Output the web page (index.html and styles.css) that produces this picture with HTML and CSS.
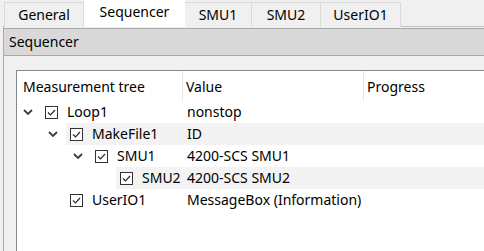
FILE: index.html
```html
<!DOCTYPE html>
<html lang="en">
  <head>
    <meta charset="UTF-8" />
    <title>Sequencer</title>
    <link rel="stylesheet" href="styles.css">
  </head>
  <body>
    <div class="window">
      <div class="tabs">
        <div class="tab tab-general">General</div>
        <div class="tab tab-sequencer active">Sequencer</div>
        <div class="tab tab-smu1">SMU1</div>
        <div class="tab tab-smu2">SMU2</div>
        <div class="tab tab-userio">UserIO1</div>
      </div>
      <!-- .tabs -->

      <div class="pane">
        <div class="pane-title">Sequencer</div>

        <div class="tree">
          <div class="tree-header">
            <div class="head head-name">Measurement tree</div>
            <div class="head head-value">Value</div>
            <div class="head head-progress">Progress</div>
          </div>

          <div class="row lvl0">
            <div class="tree-cell">
              <span class="branch">
                <svg width="10" height="6" viewBox="0 0 10 6"><path d="M1 1 L5 5 L9 1" /></svg>
              </span>
              <span class="item">
                <span class="check"><svg width="11" height="11" viewBox="0 0 11 11"><path d="M2 5.5 L4.5 8 L9 3" /></svg></span>
                Loop1
              </span>
            </div>
            <div class="cell value">nonstop</div>
            <div class="cell"></div>
          </div>

          <div class="row lvl1 alt">
            <div class="tree-cell">
              <span class="branch">
                <svg width="10" height="6" viewBox="0 0 10 6"><path d="M1 1 L5 5 L9 1" /></svg>
              </span>
              <span class="item">
                <span class="check"><svg width="11" height="11" viewBox="0 0 11 11"><path d="M2 5.5 L4.5 8 L9 3" /></svg></span>
                MakeFile1
              </span>
            </div>
            <div class="cell value">ID</div>
            <div class="cell"></div>
          </div>

          <div class="row lvl2">
            <div class="tree-cell">
              <span class="branch">
                <svg width="10" height="6" viewBox="0 0 10 6"><path d="M1 1 L5 5 L9 1" /></svg>
              </span>
              <span class="item">
                <span class="check"><svg width="11" height="11" viewBox="0 0 11 11"><path d="M2 5.5 L4.5 8 L9 3" /></svg></span>
                SMU1
              </span>
            </div>
            <div class="cell value">4200-SCS SMU1</div>
            <div class="cell"></div>
          </div>

          <div class="row lvl3 alt">
            <div class="tree-cell">
              <span class="branch"></span>
              <span class="item">
                <span class="check"><svg width="11" height="11" viewBox="0 0 11 11"><path d="M2 5.5 L4.5 8 L9 3" /></svg></span>
                SMU2
              </span>
            </div>
            <div class="cell value">4200-SCS SMU2</div>
            <div class="cell"></div>
          </div>

          <div class="row lvl1">
            <div class="tree-cell">
              <span class="branch"></span>
              <span class="item">
                <span class="check"><svg width="11" height="11" viewBox="0 0 11 11"><path d="M2 5.5 L4.5 8 L9 3" /></svg></span>
                UserIO1
              </span>
            </div>
            <div class="cell value">MessageBox (Information)</div>
            <div class="cell"></div>
          </div>
        </div>
        <!-- .tree -->
      </div>
      <!-- .pane -->
    </div>
    <!-- .window -->
  </body>
</html>
```

FILE: styles.css
```css
*,
*::before,
*::after {
  box-sizing: border-box;
  padding: 0;
  margin: 0;
  font-family: 'Noto Sans', 'Liberation Sans', sans-serif;
}

body {
  width: 484px;
  height: 251px;
  overflow: hidden;
  background-color: #f0f0f0;
  color: #000;
  font-size: 14px;
}

.window {
  width: 100%;
  height: 251px;
  display: flex;
  flex-direction: column;
}

/* tab strip */

.tabs {
  display: flex;
  height: 26px;
  padding-left: 4px;
  position: relative;
  z-index: 1;
}

.tab {
  height: 25px;
  margin-top: 2px;
  display: flex;
  justify-content: center;
  align-items: center;
  padding-bottom: 2px;
  background-color: #f0f0f0;
  border: 1px solid #d9d9d9;
  border-bottom: none;
  border-left: none;
}

.tab-general {
  width: 80px;
  border-left: 1px solid #d9d9d9;
}

.tab-sequencer {
  width: 101px;
}

.tab-smu1 {
  width: 67px;
}

.tab-smu2 {
  width: 69px;
}

.tab-userio {
  width: 80px;
}

.tab.active {
  height: 27px;
  margin-top: 0;
  padding-bottom: 5px;
  background-color: #fff;
  border: none;
}

/* pane */

.pane {
  flex: 1;
  display: flex;
  flex-direction: column;
  margin-left: 3px;
  border-top: 1px solid #c4c4c4;
  border-left: 1px solid #adadad;
}

.pane-title {
  height: 28px;
  margin-top: 1px;
  padding: 0 0 1px 5px;
  display: flex;
  align-items: center;
  background-color: #d9d9d9;
  border-top: 1px solid #a8a8a8;
  border-bottom: 1px solid #a8a8a8;
}

.tree {
  flex: 1;
  margin: 14px 0 0 12px;
  background-color: #fff;
  border-top: 1px solid #828790;
  border-left: 1px solid #828790;
}

.tree-header {
  display: grid;
  grid-template-columns: 166px 181px 1fr;
  height: 30px;
}

.head {
  display: flex;
  align-items: center;
  border-right: 1px solid #e5e5e5;
}

.head-name {
  padding-left: 6px;
}

.head-value,
.head-progress {
  padding-left: 3px;
}

.head-progress {
  border-right: none;
}

.row {
  display: grid;
  grid-template-columns: 166px 181px 1fr;
  height: 22px;
  line-height: 22px;
}

.tree-cell {
  display: flex;
}

.lvl1 .tree-cell {
  padding-left: 25px;
}

.lvl2 .tree-cell {
  padding-left: 50px;
}

.lvl3 .tree-cell {
  padding-left: 75px;
}

.branch {
  width: 24px;
  flex-shrink: 0;
  display: flex;
  align-items: center;
  padding-left: 6px;
}

.branch path {
  fill: none;
  stroke: #3c3c3c;
  stroke-width: 1.8;
}

.item {
  flex: 1;
  display: flex;
  align-items: center;
  padding-left: 4px;
  white-space: nowrap;
}

.check {
  width: 13px;
  height: 13px;
  margin-right: 9px;
  display: flex;
  border: 1px solid #333;
  background-color: #fff;
}

.check path {
  fill: none;
  stroke: #2b2b2b;
  stroke-width: 1.2;
}

.cell.value {
  padding-left: 4px;
  white-space: nowrap;
}

.alt .item,
.alt .cell {
  background-color: #f3f3f3;
}
```
